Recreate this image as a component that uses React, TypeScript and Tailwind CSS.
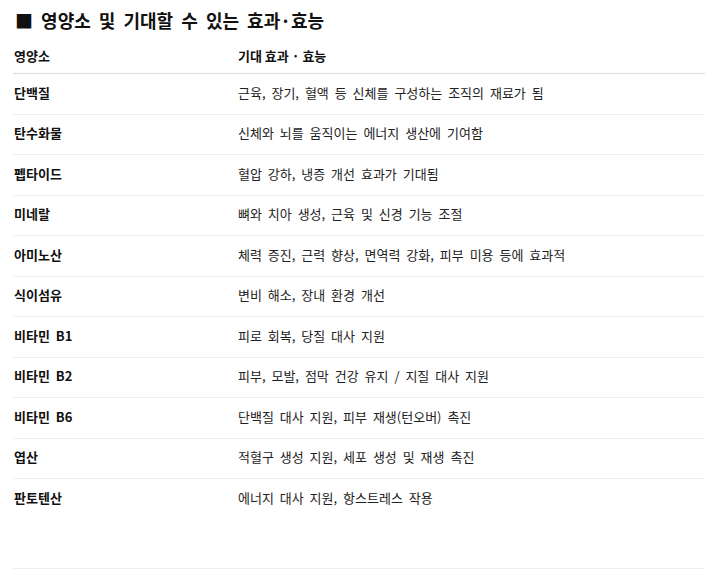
import React from 'react';

const rows: [string, string][] = [
  ['단백질', '근육, 장기, 혈액 등 신체를 구성하는 조직의 재료가 됨'],
  ['탄수화물', '신체와 뇌를 움직이는 에너지 생산에 기여함'],
  ['펩타이드', '혈압 강하, 냉증 개선 효과가 기대됨'],
  ['미네랄', '뼈와 치아 생성, 근육 및 신경 기능 조절'],
  ['아미노산', '체력 증진, 근력 향상, 면역력 강화, 피부 미용 등에 효과적'],
  ['식이섬유', '변비 해소, 장내 환경 개선'],
  ['비타민 B1', '피로 회복, 당질 대사 지원'],
  ['비타민 B2', '피부, 모발, 점막 건강 유지 / 지질 대사 지원'],
  ['비타민 B6', '단백질 대사 지원, 피부 재생(턴오버) 촉진'],
  ['엽산', '적혈구 생성 지원, 세포 생성 및 재생 촉진'],
  ['판토텐산', '에너지 대사 지원, 항스트레스 작용'],
];

export default function App() {
  return (
    <div
      className="min-h-[576px] bg-white pt-[7px] pl-[13px] pr-[8px] text-[#222]"
      style={{ fontFamily: '"Noto Sans CJK KR", "Noto Sans", sans-serif' }}
    >
      {/* Title */}
      <h2 className="pl-[2px] text-[18px] leading-[26px] font-bold text-[#111] [word-spacing:4px]">
        ■ 영양소 및 기대할 수 있는 효과·효능
      </h2>

      {/* Table */}
      <div className="mt-2 text-[13px] [word-spacing:3px]">
        <div className="grid grid-cols-[224px_1fr] border-b border-[#dcdcdc] pt-[7px] pb-[9px] leading-[16px] font-bold text-[#111] [word-spacing:0px]">
          <div className="pl-px">영양소</div>
          <div className="pl-px">기대 효과 · 효능</div>
        </div>
        {rows.map(([name, effect], index) => {
          const last = index === rows.length - 1;
          return (
            <div
              key={name}
              className={
                last
                  ? 'grid h-[89.5px] grid-cols-[224px_1fr] items-start border-b border-[#eeeeee] pt-[11px] leading-[16px]'
                  : 'grid h-[40.5px] grid-cols-[224px_1fr] items-center border-b border-[#eeeeee] pb-[2px] leading-[16px]'
              }
            >
              <div className="pl-px font-semibold text-[#111]">{name}</div>
              <div className="pl-px">{effect}</div>
            </div>
          );
        })}
      </div>
    </div>
  );
}
